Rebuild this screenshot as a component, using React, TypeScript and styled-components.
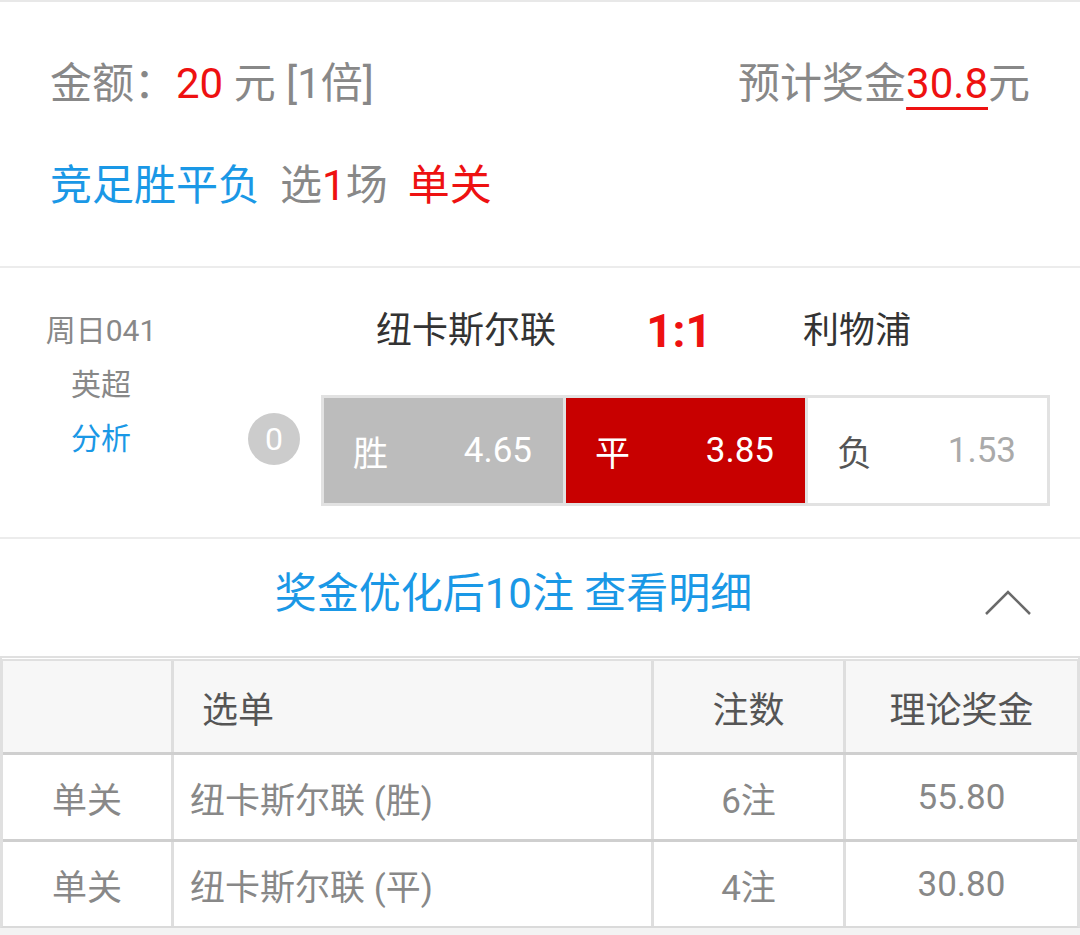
import React from "react";
import styled, { createGlobalStyle } from "styled-components";

const GlobalStyle = createGlobalStyle`
  html, body { margin: 0; padding: 0; background: #f3f3f3; }
  body {
    font-family: Roboto, "Noto Sans CJK SC", sans-serif;
    -webkit-font-smoothing: antialiased;
  }
  * { box-sizing: border-box; }
`;

const BLUE = "#1a98e6";
const RED = "#ee1111";
const GRAY = "#888888";

const Page = styled.div`
  width: 1080px;
  background: #ffffff;
`;

const Summary = styled.section`
  border-top: 2px solid #e8e8e8;
  border-bottom: 2px solid #ececec;
  padding: 54px 50px 52px;
  display: flex;
  flex-direction: column;
  gap: 46px;
`;

const SummaryRow = styled.div<{ $spread?: boolean }>`
  display: flex;
  justify-content: ${(p) => (p.$spread ? "space-between" : "flex-start")};
  align-items: center;
  gap: ${(p) => (p.$spread ? "0" : "20px")};
  font-size: 42px;
  line-height: 56px;
  color: ${GRAY};
  white-space: nowrap;
`;

const Tone = styled.span<{ $c: string }>`
  color: ${(p) => p.$c};
`;

const Underlined = styled.span`
  color: ${RED};
  text-decoration: underline;
  text-decoration-color: ${RED};
  text-decoration-thickness: 3px;
  text-underline-offset: 9px;
`;

const Match = styled.section`
  display: grid;
  grid-template-columns: 202px 1fr;
  border-bottom: 2px solid #ececec;
  padding-bottom: 31px;
`;

const Meta = styled.div`
  padding-top: 36px;
  display: flex;
  flex-direction: column;
  align-items: center;
  font-size: 30px;
  line-height: 54px;
  color: ${GRAY};
`;

const Board = styled.div`
  padding: 38px 30px 0 46px;
  display: flex;
  flex-direction: column;
  gap: 39px;
`;

const Teams = styled.div`
  display: grid;
  grid-template-columns: 290px 136px 220px;
  margin-left: 73px;
  align-items: center;
  text-align: center;
  line-height: 50px;
`;

const Team = styled.div`
  font-size: 36px;
  color: #333333;
`;

const Score = styled.div`
  font-size: 46px;
  font-weight: 700;
  color: ${RED};
`;

const OddsRow = styled.div`
  display: flex;
  align-items: flex-start;
  gap: 21px;
`;

const Handicap = styled.div`
  flex: none;
  width: 52px;
  height: 52px;
  margin-top: 18px;
  border-radius: 50%;
  background: #cccccc;
  color: #ffffff;
  font-size: 32px;
  display: flex;
  align-items: center;
  justify-content: center;
`;

const OddsBox = styled.div`
  flex: 1;
  height: 111px;
  background: #e2e2e2;
  padding: 3px;
  display: grid;
  grid-template-columns: repeat(3, 1fr);
  gap: 3px;
`;

type Variant = "picked" | "active" | "plain";

const OddsCell = styled.div<{ $v: Variant }>`
  display: flex;
  justify-content: space-between;
  align-items: center;
  padding: 0 31px 0 29px;
  font-size: 35px;
  background: ${(p) =>
    p.$v === "picked" ? "#bcbcbc" : p.$v === "active" ? "#c80000" : "#ffffff"};
  color: ${(p) => (p.$v === "plain" ? "#555555" : "#ffffff")};
`;

const OddsValue = styled.span<{ $v: Variant }>`
  color: ${(p) => (p.$v === "plain" ? "#aaaaaa" : "#ffffff")};
`;

const BonusBar = styled.div`
  display: flex;
  align-items: flex-start;
  padding: 27px 49px 34px 0;
`;

const BonusTitle = styled.div`
  flex: 1;
  padding-left: 42px;
  text-align: center;
  font-size: 42px;
  line-height: 56px;
  color: ${BLUE};
`;

const Chevron = styled.svg`
  flex: none;
  margin-top: 24px;
`;

const Table = styled.div`
  border-top: 5px double #e0e0e0;
  border-left: 3px solid #e0e0e0;
  border-right: 3px solid #e0e0e0;
  border-bottom: 2px solid #dadada;
`;

const Row = styled.div<{ $head?: boolean }>`
  display: grid;
  grid-template-columns: 168px 477px 189px 1fr;
  column-gap: 3px;
  background: #dedede;
  height: ${(p) => (p.$head ? 91 : 87)}px;
  border-top: ${(p) => (p.$head ? "none" : "3px solid #cfcfcf")};
`;

const Cell = styled.div<{ $head?: boolean; $align?: "left" | "center"; $pad?: number }>`
  display: flex;
  align-items: center;
  justify-content: ${(p) => (p.$align === "left" ? "flex-start" : "center")};
  padding-left: ${(p) => p.$pad ?? 0}px;
  background: ${(p) => (p.$head ? "#f7f7f7" : "#ffffff")};
  color: ${(p) => (p.$head ? "#555555" : GRAY)};
  font-size: ${(p) => (p.$head ? 36 : 35)}px;
  white-space: nowrap;
`;

const rows = [
  { type: "单关", pick: "纽卡斯尔联 (胜)", count: "6注", prize: "55.80" },
  { type: "单关", pick: "纽卡斯尔联 (平)", count: "4注", prize: "30.80" },
];

const odds: { label: string; value: string; v: Variant }[] = [
  { label: "胜", value: "4.65", v: "picked" },
  { label: "平", value: "3.85", v: "active" },
  { label: "负", value: "1.53", v: "plain" },
];

export default function App() {
  return (
    <>
      <GlobalStyle />
      <Page>
        <Summary>
          <SummaryRow $spread>
            <span>
              金额：<Tone $c={RED}>20</Tone> 元 [1倍]
            </span>
            <span>
              预计奖金<Underlined>30.8</Underlined>元
            </span>
          </SummaryRow>
          <SummaryRow>
            <Tone $c={BLUE}>竞足胜平负</Tone>
            <span>
              选<Tone $c={RED}>1</Tone>场
            </span>
            <Tone $c={RED}>单关</Tone>
          </SummaryRow>
        </Summary>

        <Match>
          <Meta>
            <span>周日041</span>
            <span>英超</span>
            <Tone $c={BLUE}>分析</Tone>
          </Meta>
          <Board>
            <Teams>
              <Team>纽卡斯尔联</Team>
              <Score>1:1</Score>
              <Team>利物浦</Team>
            </Teams>
            <OddsRow>
              <Handicap>0</Handicap>
              <OddsBox>
                {odds.map((o) => (
                  <OddsCell key={o.label} $v={o.v}>
                    <span>{o.label}</span>
                    <OddsValue $v={o.v}>{o.value}</OddsValue>
                  </OddsCell>
                ))}
              </OddsBox>
            </OddsRow>
          </Board>
        </Match>

        <BonusBar>
          <BonusTitle>奖金优化后10注 查看明细</BonusTitle>
          <Chevron width="46" height="26" viewBox="0 0 46 26">
            <polyline
              points="1,24 23,2 45,24"
              fill="none"
              stroke="#6a6a6a"
              strokeWidth="2.5"
            />
          </Chevron>
        </BonusBar>

        <Table>
          <Row $head>
            <Cell $head />
            <Cell $head $align="left" $pad={28}>
              选单
            </Cell>
            <Cell $head>注数</Cell>
            <Cell $head>理论奖金</Cell>
          </Row>
          {rows.map((r, i) => (
            <Row key={i}>
              <Cell>{r.type}</Cell>
              <Cell $align="left" $pad={16}>
                {r.pick}
              </Cell>
              <Cell>{r.count}</Cell>
              <Cell>{r.prize}</Cell>
            </Row>
          ))}
        </Table>
      </Page>
    </>
  );
}
